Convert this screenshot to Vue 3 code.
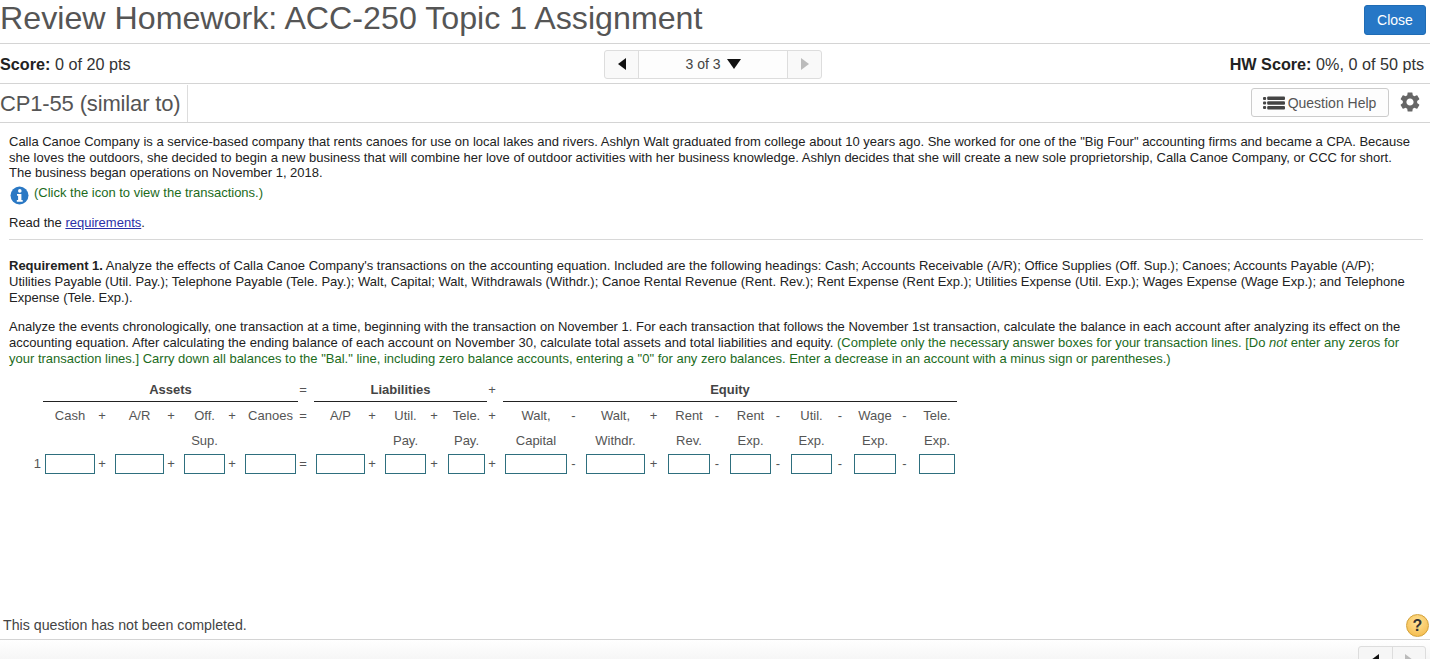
<script setup>
const sums = ['Cash','+','A/R','+','Off.','+','Canoes','=','A/P','+','Util.','+','Tele.','+','Walt,','-','Walt,','+','Rent','-','Rent','-','Util.','-','Wage','-','Tele.']
const second = ['','','','','Sup.','','','','','','Pay.','','Pay.','','Capital','','Withdr.','','Rev.','','Exp.','','Exp.','','Exp.','','Exp.']
</script>

<template>
  <div class="page">
    <header class="title-bar">
      <h1>Review Homework: ACC-250 Topic 1 Assignment</h1>
      <button class="close">Close</button>
    </header>
    <div class="score-bar">
      <div class="score"><b>Score:</b> 0 of 20 pts</div>
      <div class="pager">
        <span class="pg-btn"><i class="tri left"></i></span>
        <span class="pg-mid">3 of 3 <i class="tri down"></i></span>
        <span class="pg-btn"><i class="tri right"></i></span>
      </div>
      <div class="hw"><b>HW Score:</b> 0%, 0 of 50 pts</div>
    </div>
    <div class="q-bar">
      <h2>CP1-55 (similar to)</h2>
      <div class="q-tools">
        <button class="help">
          <svg width="22" height="14" viewBox="0 0 21 14" preserveAspectRatio="none"><g fill="#444"><rect x="0" y="1" width="3" height="3" rx="1"/><rect x="0" y="5.5" width="3" height="3" rx="1"/><rect x="0" y="10" width="3" height="3" rx="1"/><rect x="4" y="0.5" width="17" height="3.6" rx="1"/><rect x="4" y="5.2" width="17" height="3.6" rx="1"/><rect x="4" y="9.9" width="17" height="3.6" rx="1"/></g></svg>
          Question Help
        </button>
        <svg class="gear" width="24" height="24" viewBox="0 0 24 24"><path fill="#666" d="M19.14 12.94c.04-.3.06-.61.06-.94 0-.32-.02-.64-.07-.94l2.03-1.58c.18-.14.23-.41.12-.61l-1.92-3.32c-.12-.22-.37-.29-.59-.22l-2.39.96c-.5-.38-1.03-.7-1.62-.94l-.36-2.54c-.04-.24-.24-.41-.48-.41h-3.84c-.24 0-.43.17-.47.41l-.36 2.54c-.59.24-1.13.57-1.62.94l-2.39-.96c-.22-.08-.47 0-.59.22L2.74 8.87c-.12.21-.08.47.12.61l2.03 1.58c-.05.3-.09.63-.09.94s.02.64.07.94l-2.03 1.58c-.18.14-.23.41-.12.61l1.92 3.32c.12.22.37.29.59.22l2.39-.96c.5.38 1.03.7 1.62.94l.36 2.54c.05.24.24.41.48.41h3.84c.24 0 .44-.17.47-.41l.36-2.54c.59-.24 1.13-.56 1.62-.94l2.39.96c.22.08.47 0 .59-.22l1.92-3.32c.12-.22.07-.47-.12-.61l-2.01-1.58zM12 15.6c-1.98 0-3.6-1.62-3.6-3.6s1.62-3.6 3.6-3.6 3.6 1.62 3.6 3.6-1.62 3.6-3.6 3.6z"/></svg>
      </div>
    </div>

    <main class="content">
      <section class="intro">
        <p>Calla Canoe Company is a service-based company that rents canoes for use on local lakes and rivers. Ashlyn Walt graduated from college about 10 years ago. She worked for one of the "Big Four" accounting firms and became a CPA. Because<br>she loves the outdoors, she decided to begin a new business that will combine her love of outdoor activities with her business knowledge. Ashlyn decides that she will create a new sole proprietorship, Calla Canoe Company, or CCC for short.<br>The business began operations on November 1, 2018.</p>
        <div class="click">
          <svg class="info" width="19" height="19" viewBox="0 0 19 19"><circle cx="9.5" cy="9.5" r="9" fill="#2a78c4"/><circle cx="9.8" cy="4.9" r="1.8" fill="#fff"/><path fill="#fff" d="M7 8h4.4v6h1.3v1.7H6.8V14h1.3V9.7H7z"/></svg>
          <span class="green">(Click the icon to view the transactions.)</span>
        </div>
        <p class="read">Read the <a href="#">requirements</a>.</p>
      </section>

      <section class="req">
        <p><b>Requirement 1.</b> Analyze the effects of Calla Canoe Company's transactions on the accounting equation. Included are the following headings: Cash; Accounts Receivable (A/R); Office Supplies (Off. Sup.); Canoes; Accounts Payable (A/P);<br>Utilities Payable (Util. Pay.); Telephone Payable (Tele. Pay.); Walt, Capital; Walt, Withdrawals (Withdr.); Canoe Rental Revenue (Rent. Rev.); Rent Expense (Rent Exp.); Utilities Expense (Util. Exp.); Wages Expense (Wage Exp.); and Telephone<br>Expense (Tele. Exp.).</p>
        <p class="analyze">Analyze the events chronologically, one transaction at a time, beginning with the transaction on November 1. For each transaction that follows the November 1st transaction, calculate the balance in each account after analyzing its effect on the<br>accounting equation. After calculating the ending balance of each account on November 30, calculate total assets and total liabilities and equity. <span class="green">(Complete only the necessary answer boxes for your transaction lines. [Do <i>not</i> enter any zeros for<br>your transaction lines.]</span> <span class="green">Carry down all balances to the "Bal." line, including zero balance accounts, entering a "0" for any zero balances. Enter a decrease in an account with a minus sign or parentheses.)</span></p>
      </section>

      <div class="sheet">
        <div class="heads">
          <div class="head assets">Assets</div>
          <div class="op eq1">=</div>
          <div class="head liab">Liabilities</div>
          <div class="op pl1">+</div>
          <div class="head equity">Equity</div>
        </div>
        <div class="row r2">
          <span class="lbl"></span>
          <span v-for="(s, i) in sums" :key="i" class="cell" :class="{ op: i % 2 }">{{ s }}</span>
        </div>
        <div class="row r3">
          <span class="lbl"></span>
          <span v-for="(s, i) in second" :key="i" class="cell">{{ s }}</span>
        </div>
        <div class="row r4">
          <span class="lbl num">1</span>
          <template v-for="(s, i) in sums" :key="i">
            <span v-if="i % 2" class="cell op">{{ s }}</span>
            <span v-else class="box"></span>
          </template>
        </div>
      </div>
    </main>

    <footer class="foot">
      <div class="status">
        <span>This question has not been completed.</span>
        <span class="q-mark">?</span>
      </div>
      <div class="foot-nav">
        <div class="mini">
          <span class="mini-btn"><i class="tri left"></i></span>
          <span class="mini-btn"><i class="tri right"></i></span>
        </div>
      </div>
    </footer>
  </div>
</template>

<style>
html, body { margin: 0; background: #fff; overflow: hidden; }
</style>

<style scoped>
.page {
  width: 1430px; height: 659px; overflow: hidden;
  display: flex; flex-direction: column;
  font-family: "Liberation Sans", Arial, sans-serif; color: #333;
  box-sizing: border-box;
}
.title-bar {
  height: 44px; box-sizing: border-box; flex: none;
  display: flex; align-items: flex-start; justify-content: space-between;
  border-bottom: 1px solid #d4d4d4; padding-right: 4px;
}
h1 { margin: -1px 0 0; font-size: 32.2px; line-height: 38px; font-weight: 400; color: #555; }
.close {
  margin-top: 5px; width: 62px; height: 30px; border: 1px solid #1f6cb5; border-radius: 3px;
  background: #2677c6; color: #fff; font: 14px "Liberation Sans", sans-serif; padding: 0;
}
.score-bar {
  height: 40px; box-sizing: border-box; flex: none;
  display: grid; grid-template-columns: 1fr 218px 1fr; align-items: center;
  border-bottom: 1px solid #d4d4d4; font-size: 16.2px; color: #333; padding: 1px 6px 0 0;
}
.score-bar b { color: #222; }
.hw { text-align: right; }
.pager {
  margin-left: 1px; display: flex; height: 29px; margin-top: 0; border: 1px solid #ddd; border-radius: 3px; box-sizing: border-box;
  background: #f9f9f9; font-size: 14px; width: 218px;
}
.pg-btn { width: 33px; display: flex; align-items: center; justify-content: center; }
.pg-mid {
  flex: 1; background: #fdfdfd; border-left: 1px solid #ddd; border-right: 1px solid #ddd;
  display: flex; align-items: center; justify-content: center; gap: 6px; color: #444;
}
.tri { display: block; width: 0; height: 0; border-style: solid; }
.tri.left { border-width: 6px 8px 6px 0; border-color: transparent #111 transparent transparent; }
.tri.right { border-width: 6px 0 6px 8px; border-color: transparent transparent transparent #bbb; }
.tri.down { border-width: 10px 7px 0 7px; border-color: #111 transparent transparent transparent; }
.q-bar {
  height: 39px; box-sizing: border-box; flex: none;
  display: flex; align-items: stretch; justify-content: space-between;
  border-bottom: 1px solid #d4d4d4; padding-right: 8px;
}
h2 {
  margin: 1px 0 0; font-size: 22px; line-height: 37px; height: 37px; font-weight: 400; color: #555;
  border-right: 1px solid #ddd; padding-right: 6px; letter-spacing: -.15px;
}
.q-tools { display: flex; align-items: center; gap: 9px; }
.help {
  width: 138px; height: 29px; margin-top: -1px; box-sizing: border-box; border: 1px solid #ccc; border-radius: 3px; background: #fdfdfd;
  display: flex; align-items: center; justify-content: center; gap: 3px; padding: 0 1px 0 0;
  font: 14px "Liberation Sans", sans-serif; color: #555;
}
.gear { margin-top: -2px; }
.content { flex: 1; min-height: 0; font-size: 13px; line-height: 15.6px; color: #222; }
p { margin: 0; white-space: nowrap; }
.intro { margin: 0 7px 0 9px; padding: 11px 0 9px; border-bottom: 1px solid #d8d8d8; }
.click { display: flex; align-items: center; gap: 5px; margin: 2px 0 0; height: 21px; }
.info { margin: 4px 0 0 1px; }
.green { color: #1c6b1c; }
.read { margin-top: 11px; }
a { color: #2a2fa8; text-decoration: underline; }
.req { margin: 18px 0 0 9px; }
.analyze { margin-top: 14px; line-height: 16px; }
.sheet { margin-top: 12px; color: #555; }
.heads, .row {
  display: grid;
  grid-template-columns: 45px 50px 20px 49px 20px 41px 20px 51px 20px 49px 20px 41px 22px 37px 20px 62px 19px 59px 23px 42px 20px 41px 20px 41px 22px 42px 23px 36px;
  align-items: center;
}
.heads { height: 23px; align-items: start; }
.head { font-weight: 700; text-align: center; color: #444; border-bottom: 1px solid #222; margin: 0 -2px; height: 23px; line-height: 22px; box-sizing: border-box; }
.assets { grid-column: 2 / span 7; }
.op { text-align: center; padding-right: 6px; }
.heads .op { line-height: 22px; }
.eq1 { grid-column: 9; }
.liab { grid-column: 10 / span 5; }
.pl1 { grid-column: 15; }
.equity { grid-column: 16 / span 13; }
.row { height: 25px; }
.r2 { margin-top: 1px; }
.cell { text-align: center; white-space: nowrap; }
.lbl.num { text-align: right; padding-right: 4px; }
.r4 { height: 22px; margin-top: 0; }
.box { display: block; height: 20px; box-sizing: border-box; border: 1px solid #2e6f7e; background: #fff; }
.foot { flex: none; }
.status {
  height: 30px; box-sizing: border-box; border-bottom: 1px solid #d4d4d4; padding: 7px 1px 0 3px;
  display: flex; justify-content: space-between; align-items: flex-start; font-size: 14.2px; color: #444; line-height: 16px;
}
.q-mark {
  width: 23px; height: 23px; border-radius: 50%; margin-top: -3px; border: 1px solid #d3a23a; box-sizing: border-box;
  background: radial-gradient(circle at 50% 35%, #ffe39a, #f3b53f);
  display: flex; align-items: center; justify-content: center; font-weight: 700; font-size: 16px; color: #333;
}
.foot-nav { height: 19px; background: linear-gradient(#fff, #f6f6f6); display: flex; justify-content: flex-end; padding: 6px 4px 0 0; box-sizing: border-box; overflow: hidden; }
.mini { display: flex; height: 29px; width: 68px; border: 1px solid #ddd; border-radius: 3px; box-sizing: border-box; background: #f6f6f6; flex: none; }
.mini-btn { flex: 1; display: flex; justify-content: center; padding-top: 7px; box-sizing: border-box; }
.mini-btn + .mini-btn { border-left: 1px solid #ddd; }
</style>
